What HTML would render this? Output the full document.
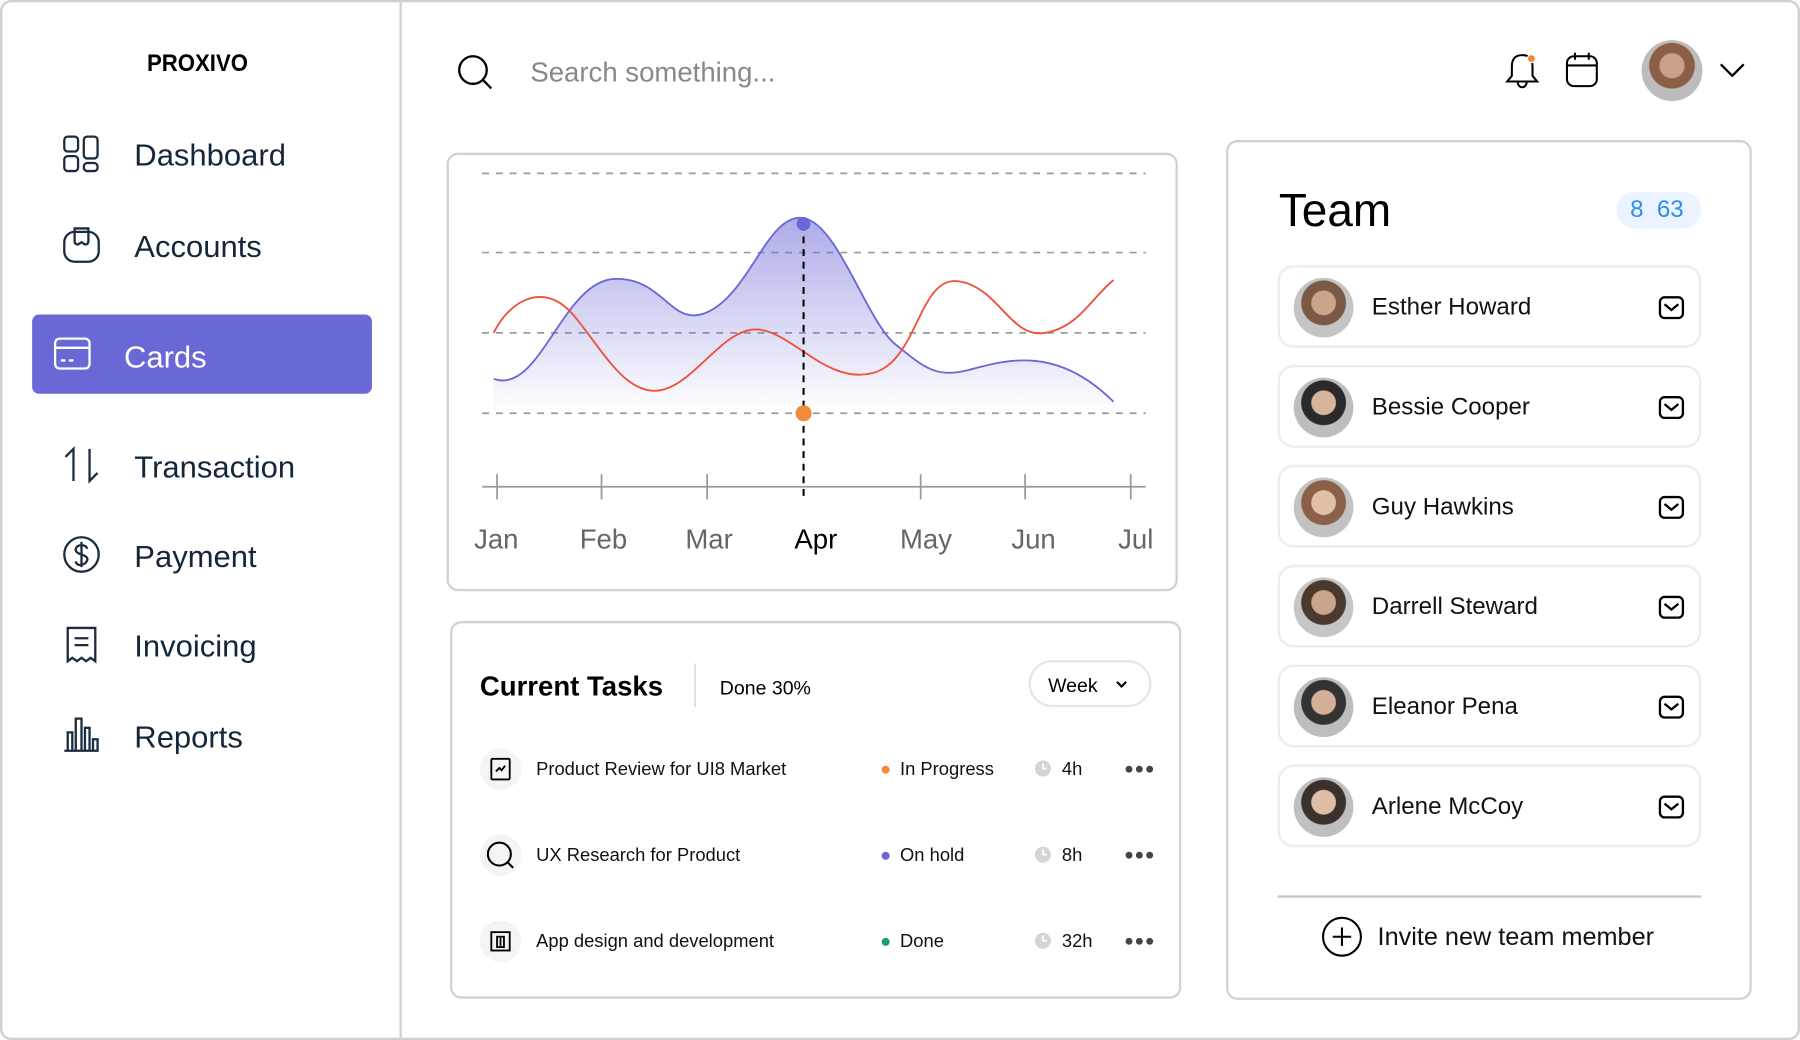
<!DOCTYPE html>
<html><head><meta charset="utf-8"><style>
*{margin:0;padding:0;box-sizing:border-box}
html,body{width:1800px;height:1040px;overflow:hidden;background:#fff}
#w{position:absolute;left:0;top:0;width:1568px;height:906px;transform:scale(1.147959);transform-origin:0 0;font-family:"Liberation Sans",sans-serif;color:#0f2236}
.a{position:absolute}
.nav{position:absolute;left:117px;font-size:27px;color:#14263a}
.ic{position:absolute;left:54px}
.card{position:absolute;border:2px solid #d2d2d2;border-radius:10px;background:#fff}
.mem{position:absolute;left:1113px;width:369px;height:72px;border:2px solid #ececf1;border-radius:14px}
.mem .av{position:absolute;left:12px;top:9px;width:52px;height:52px;border-radius:50%;background:radial-gradient(circle at 50% 42%,#c9a58c 0 26%,#7a5a45 28% 48%,#c4c4c4 50%)}
.mem .n{position:absolute;left:80px;top:23px;font-size:21px;color:#111}
.mem svg{position:absolute;right:12px;top:24px}
.t{position:absolute;font-size:16px;color:#111}
.d{position:absolute;left:980px;font-size:20px;letter-spacing:1px;color:#444}
</style></head><body><div id="w">
<div class="a" style="left:0;top:0;width:1568px;height:906px;border:2px solid #cfcfcf;border-radius:10px"></div>
<div class="a" style="left:348px;top:0;width:2px;height:906px;background:#d2d2d2"></div>
<div class="a" style="left:128px;top:44px;font-size:21px;font-weight:bold;color:#000;transform:scaleX(0.92);transform-origin:0 0">PROXIVO</div>

<svg class="ic" style="top:117px" width="34" height="34" viewBox="0 0 34 34" fill="none" stroke="#1a2d40" stroke-width="2"><rect x="2" y="2" width="12" height="13" rx="3"/><rect x="19" y="2" width="12" height="19" rx="3"/><rect x="2" y="19" width="12" height="13" rx="3"/><rect x="19" y="25" width="12" height="7" rx="3"/></svg>
<div class="nav" style="top:120px">Dashboard</div>
<svg class="ic" style="top:196px" width="34" height="34" viewBox="0 0 34 34" fill="none" stroke="#1a2d40" stroke-width="2"><rect x="2" y="6" width="30" height="26" rx="9"/><path d="M11 3h12v11q0 3-3 3l-3-2-3 2q-3 0-3-3z"/></svg>
<div class="nav" style="top:200px">Accounts</div>
<div class="a" style="left:28px;top:274px;width:296px;height:69px;background:#6a67d6;border-radius:6px"></div>
<svg class="a" style="left:46px;top:293px" width="34" height="30" viewBox="0 0 34 30" fill="none" stroke="#fff" stroke-width="2"><rect x="2" y="2" width="30" height="26" rx="4"/><path d="M2 10h30M7 21h4M14 21h4"/></svg>
<div class="nav" style="left:108px;top:296px;color:#fff">Cards</div>
<svg class="ic" style="top:388px" width="34" height="34" viewBox="0 0 34 34" fill="none" stroke="#1a2d40" stroke-width="2"><path d="M10 31V3L3 10M24 3v28l7-7"/></svg>
<div class="nav" style="top:392px">Transaction</div>
<svg class="ic" style="top:466px" width="34" height="34" viewBox="0 0 34 34" fill="none" stroke="#1a2d40" stroke-width="2"><circle cx="17" cy="17" r="15"/><path d="M22 12q-1-3-5-3t-5 3 5 5 5 5-5 4-5-3M17 6v22"/></svg>
<div class="nav" style="top:470px">Payment</div>
<svg class="ic" style="top:544px" width="34" height="34" viewBox="0 0 34 34" fill="none" stroke="#1a2d40" stroke-width="2"><path d="M5 3h24v29l-4-3-4 3-4-3-4 3-4-3-4 3z"/><path d="M11 12h12M11 18h12"/></svg>
<div class="nav" style="top:548px">Invoicing</div>
<svg class="ic" style="top:622px" width="34" height="34" viewBox="0 0 34 34" fill="none" stroke="#1a2d40" stroke-width="2"><path d="M2 32h30M5 32V16h4v16M12 32V4h5v28M20 32V12h4v20M27 32V22h4v10"/></svg>
<div class="nav" style="top:627px">Reports</div>

<svg class="a" style="left:397px;top:46px" width="34" height="34" viewBox="0 0 34 34" fill="none" stroke="#000" stroke-width="2"><circle cx="15" cy="15" r="12"/><path d="M24 24l7 7"/></svg>
<div class="a" style="left:462px;top:50px;font-size:24px;color:#888">Search something...</div>
<svg class="a" style="left:1310px;top:44px" width="32" height="36" viewBox="0 0 32 36" fill="none" stroke="#000" stroke-width="1.8"><path d="M16 4q-9 0-9 10v8l-4 5h26l-4-5V14q0-10-9-10zM12 28q1 4 4 4t4-4"/><circle cx="24" cy="7" r="3.5" fill="#f28a3b" stroke="#fff" stroke-width="1"/></svg>
<svg class="a" style="left:1362px;top:44px" width="32" height="34" viewBox="0 0 32 34" fill="none" stroke="#000" stroke-width="1.8"><rect x="3" y="5" width="26" height="26" rx="6"/><path d="M3 13h26M10 2v6M22 2v6"/></svg>
<div class="a" style="left:1430px;top:35px;width:53px;height:53px;border-radius:50%;background:radial-gradient(circle at 50% 42%,#c9a08a 0 26%,#8a5f45 28% 48%,#bcbcbc 50%)"></div>
<svg class="a" style="left:1496px;top:52px" width="26" height="18" viewBox="0 0 26 18" fill="none" stroke="#000" stroke-width="2"><path d="M3 4l10 10 10-10"/></svg>

<div class="card" style="left:389px;top:133px;width:637px;height:382px"></div>
<svg class="a" style="left:389px;top:133px" width="637" height="382" viewBox="389 133 637 382">
<defs><linearGradient id="g" x1="0" y1="0" x2="0" y2="1"><stop offset="0" stop-color="#6a67d6" stop-opacity="0.55"/><stop offset="1" stop-color="#6a67d6" stop-opacity="0"/></linearGradient></defs>
<g stroke="#9a9a9a" stroke-width="1.5" stroke-dasharray="6 6"><path d="M420 151H998M420 220H998M420 290H998M420 360H998"/></g>
<path d="M430 330C470 345 490 245 535 243S585 290 620 270 670 185 700 190 755 280 780 300 815 330 845 322 920 300 970 350L970 360H430Z" fill="url(#g)"/>
<path d="M430 330C470 345 490 245 535 243S585 290 620 270 670 185 700 190 755 280 780 300 815 330 845 322 920 300 970 350" fill="none" stroke="#6a67d6" stroke-width="1.6"/>
<path d="M430 290C445 260 475 245 500 275S545 345 575 340 630 285 660 287 720 335 760 325 800 240 835 245 880 295 910 290 950 260 970 244" fill="none" stroke="#f0503a" stroke-width="1.6"/>
<path d="M420 424H998" stroke="#999" stroke-width="1.5"/>
<g stroke="#999" stroke-width="1.5"><path d="M433 413v22M524 413v22M616 413v22M802 413v22M893 413v22M985 413v22"/></g>
<path d="M700 195V434" stroke="#000" stroke-width="1.8" stroke-dasharray="6 5"/>
<circle cx="700" cy="195" r="6" fill="#6a67d6"/><circle cx="700" cy="360" r="7" fill="#f28a3b"/>
<g font-family="Liberation Sans" font-size="24" fill="#666"><text x="413" y="478">Jan</text><text x="505" y="478">Feb</text><text x="597" y="478">Mar</text><text x="692" y="478" fill="#000">Apr</text><text x="784" y="478">May</text><text x="881" y="478">Jun</text><text x="974" y="478">Jul</text></g>
</svg>

<div class="card" style="left:392px;top:541px;width:637px;height:329px"></div>
<div class="a" style="left:418px;top:585px;font-size:24px;font-weight:bold;color:#000">Current Tasks</div>
<div class="a" style="left:605px;top:578px;width:1px;height:38px;background:#ccc"></div>
<div class="a" style="left:627px;top:590px;font-size:17px;color:#000">Done 30%</div>
<div class="a" style="left:896px;top:575px;width:107px;height:41px;border:2px solid #e6e6ea;border-radius:21px"></div>
<div class="a" style="left:913px;top:588px;font-size:17px;color:#000">Week</div>
<svg class="a" style="left:971px;top:591px" width="12" height="10" viewBox="0 0 12 10" fill="none" stroke="#000" stroke-width="1.8"><path d="M2 3l4 4 4-4"/></svg>

<div class="a" style="left:418px;top:652px;width:36px;height:36px;border-radius:50%;background:#f4f4f7"></div>
<svg class="a" style="left:426px;top:660px" width="20" height="20" viewBox="0 0 20 20" fill="none" stroke="#000" stroke-width="1.6"><rect x="2" y="1" width="16" height="18" rx="1"/><path d="M6 12l3-3 2 2 3-4"/></svg>
<div class="a" style="left:418px;top:727px;width:36px;height:36px;border-radius:50%;background:#f4f4f7"></div>
<svg class="a" style="left:422px;top:731px" width="28" height="28" viewBox="0 0 28 28" fill="none" stroke="#000" stroke-width="1.8"><circle cx="13" cy="13" r="10"/><path d="M20 20l5 5"/></svg>
<div class="a" style="left:418px;top:802px;width:36px;height:36px;border-radius:50%;background:#f4f4f7"></div>
<svg class="a" style="left:426px;top:810px" width="20" height="20" viewBox="0 0 20 20" fill="none" stroke="#000" stroke-width="1.6"><rect x="2" y="2" width="16" height="16"/><rect x="7" y="6" width="6" height="9"/><path d="M10 7v7"/></svg>

<div class="t" style="left:467px;top:662px">Product Review for UI8 Market</div>
<div class="t" style="left:467px;top:737px">UX Research for Product</div>
<div class="t" style="left:467px;top:812px">App design and development</div>
<div class="a" style="left:768px;top:667px;width:7px;height:7px;border-radius:50%;background:#f28a3b"></div>
<div class="a" style="left:768px;top:742px;width:7px;height:7px;border-radius:50%;background:#6a67d6"></div>
<div class="a" style="left:768px;top:817px;width:7px;height:7px;border-radius:50%;background:#1f9d6b"></div>
<div class="t" style="left:784px;top:662px">In Progress</div>
<div class="t" style="left:784px;top:737px">On hold</div>
<div class="t" style="left:784px;top:812px">Done</div>
<svg class="a" style="left:901px;top:662px" width="15" height="15" viewBox="0 0 15 15"><circle cx="7.5" cy="7.5" r="7" fill="#d5d5d8"/><path d="M7.5 3v4.5H11" stroke="#fff" stroke-width="1.5" fill="none"/></svg>
<svg class="a" style="left:901px;top:737px" width="15" height="15" viewBox="0 0 15 15"><circle cx="7.5" cy="7.5" r="7" fill="#d5d5d8"/><path d="M7.5 3v4.5H11" stroke="#fff" stroke-width="1.5" fill="none"/></svg>
<svg class="a" style="left:901px;top:812px" width="15" height="15" viewBox="0 0 15 15"><circle cx="7.5" cy="7.5" r="7" fill="#d5d5d8"/><path d="M7.5 3v4.5H11" stroke="#fff" stroke-width="1.5" fill="none"/></svg>
<div class="t" style="left:925px;top:662px">4h</div>
<div class="t" style="left:925px;top:737px">8h</div>
<div class="t" style="left:925px;top:812px">32h</div>
<svg class="a" style="left:980px;top:664px" width="25" height="12" viewBox="0 0 25 12" fill="#444"><circle cx="3.5" cy="6" r="3"/><circle cx="12.5" cy="6" r="3"/><circle cx="21.5" cy="6" r="3"/></svg>
<svg class="a" style="left:980px;top:739px" width="25" height="12" viewBox="0 0 25 12" fill="#444"><circle cx="3.5" cy="6" r="3"/><circle cx="12.5" cy="6" r="3"/><circle cx="21.5" cy="6" r="3"/></svg>
<svg class="a" style="left:980px;top:814px" width="25" height="12" viewBox="0 0 25 12" fill="#444"><circle cx="3.5" cy="6" r="3"/><circle cx="12.5" cy="6" r="3"/><circle cx="21.5" cy="6" r="3"/></svg>

<div class="card" style="left:1068px;top:122px;width:458px;height:749px"></div>
<div class="a" style="left:1114px;top:162px;font-size:40px;color:#000">Team</div>
<div class="a" style="left:1408px;top:167px;width:74px;height:32px;border-radius:16px;background:#eaf3ff;color:#2d8cf0;font-size:21px;padding:4px 0 0 12px">8&nbsp;&nbsp;63</div>

<div class="mem" style="top:231px"><div class="av"></div><div class="n">Esther Howard</div><svg width="24" height="22" viewBox="0 0 24 22" fill="none" stroke="#000" stroke-width="2"><rect x="2" y="2" width="20" height="18" rx="4"/><path d="M6 8l6 5 6-5"/></svg></div>
<div class="mem" style="top:318px"><div class="av" style="background:radial-gradient(circle at 50% 42%,#d8b49a 0 26%,#2a2a2a 28% 48%,#bdbdbd 50%)"></div><div class="n">Bessie Cooper</div><svg width="24" height="22" viewBox="0 0 24 22" fill="none" stroke="#000" stroke-width="2"><rect x="2" y="2" width="20" height="18" rx="4"/><path d="M6 8l6 5 6-5"/></svg></div>
<div class="mem" style="top:405px"><div class="av" style="background:radial-gradient(circle at 50% 42%,#e2c0a8 0 26%,#8a6048 28% 48%,#c2c2c2 50%)"></div><div class="n">Guy Hawkins</div><svg width="24" height="22" viewBox="0 0 24 22" fill="none" stroke="#000" stroke-width="2"><rect x="2" y="2" width="20" height="18" rx="4"/><path d="M6 8l6 5 6-5"/></svg></div>
<div class="mem" style="top:492px"><div class="av" style="background:radial-gradient(circle at 50% 42%,#c9a58c 0 26%,#4a3a2e 28% 48%,#c6c6c6 50%)"></div><div class="n">Darrell Steward</div><svg width="24" height="22" viewBox="0 0 24 22" fill="none" stroke="#000" stroke-width="2"><rect x="2" y="2" width="20" height="18" rx="4"/><path d="M6 8l6 5 6-5"/></svg></div>
<div class="mem" style="top:579px"><div class="av" style="background:radial-gradient(circle at 50% 42%,#d5b098 0 26%,#333 28% 48%,#bdbdbd 50%)"></div><div class="n">Eleanor Pena</div><svg width="24" height="22" viewBox="0 0 24 22" fill="none" stroke="#000" stroke-width="2"><rect x="2" y="2" width="20" height="18" rx="4"/><path d="M6 8l6 5 6-5"/></svg></div>
<div class="mem" style="top:666px"><div class="av" style="background:radial-gradient(circle at 50% 42%,#e0bea6 0 26%,#3a302c 28% 48%,#bfbfbf 50%)"></div><div class="n">Arlene McCoy</div><svg width="24" height="22" viewBox="0 0 24 22" fill="none" stroke="#000" stroke-width="2"><rect x="2" y="2" width="20" height="18" rx="4"/><path d="M6 8l6 5 6-5"/></svg></div>

<div class="a" style="left:1113px;top:780px;width:369px;height:2px;background:#bccad3"></div>
<svg class="a" style="left:1151px;top:798px" width="36" height="36" viewBox="0 0 36 36" fill="none" stroke="#000" stroke-width="1.8"><circle cx="18" cy="18" r="16.5"/><path d="M18 10v16M10 18h16"/></svg>
<div class="a" style="left:1200px;top:803px;font-size:22px;color:#111">Invite new team member</div>
</div></body></html>
